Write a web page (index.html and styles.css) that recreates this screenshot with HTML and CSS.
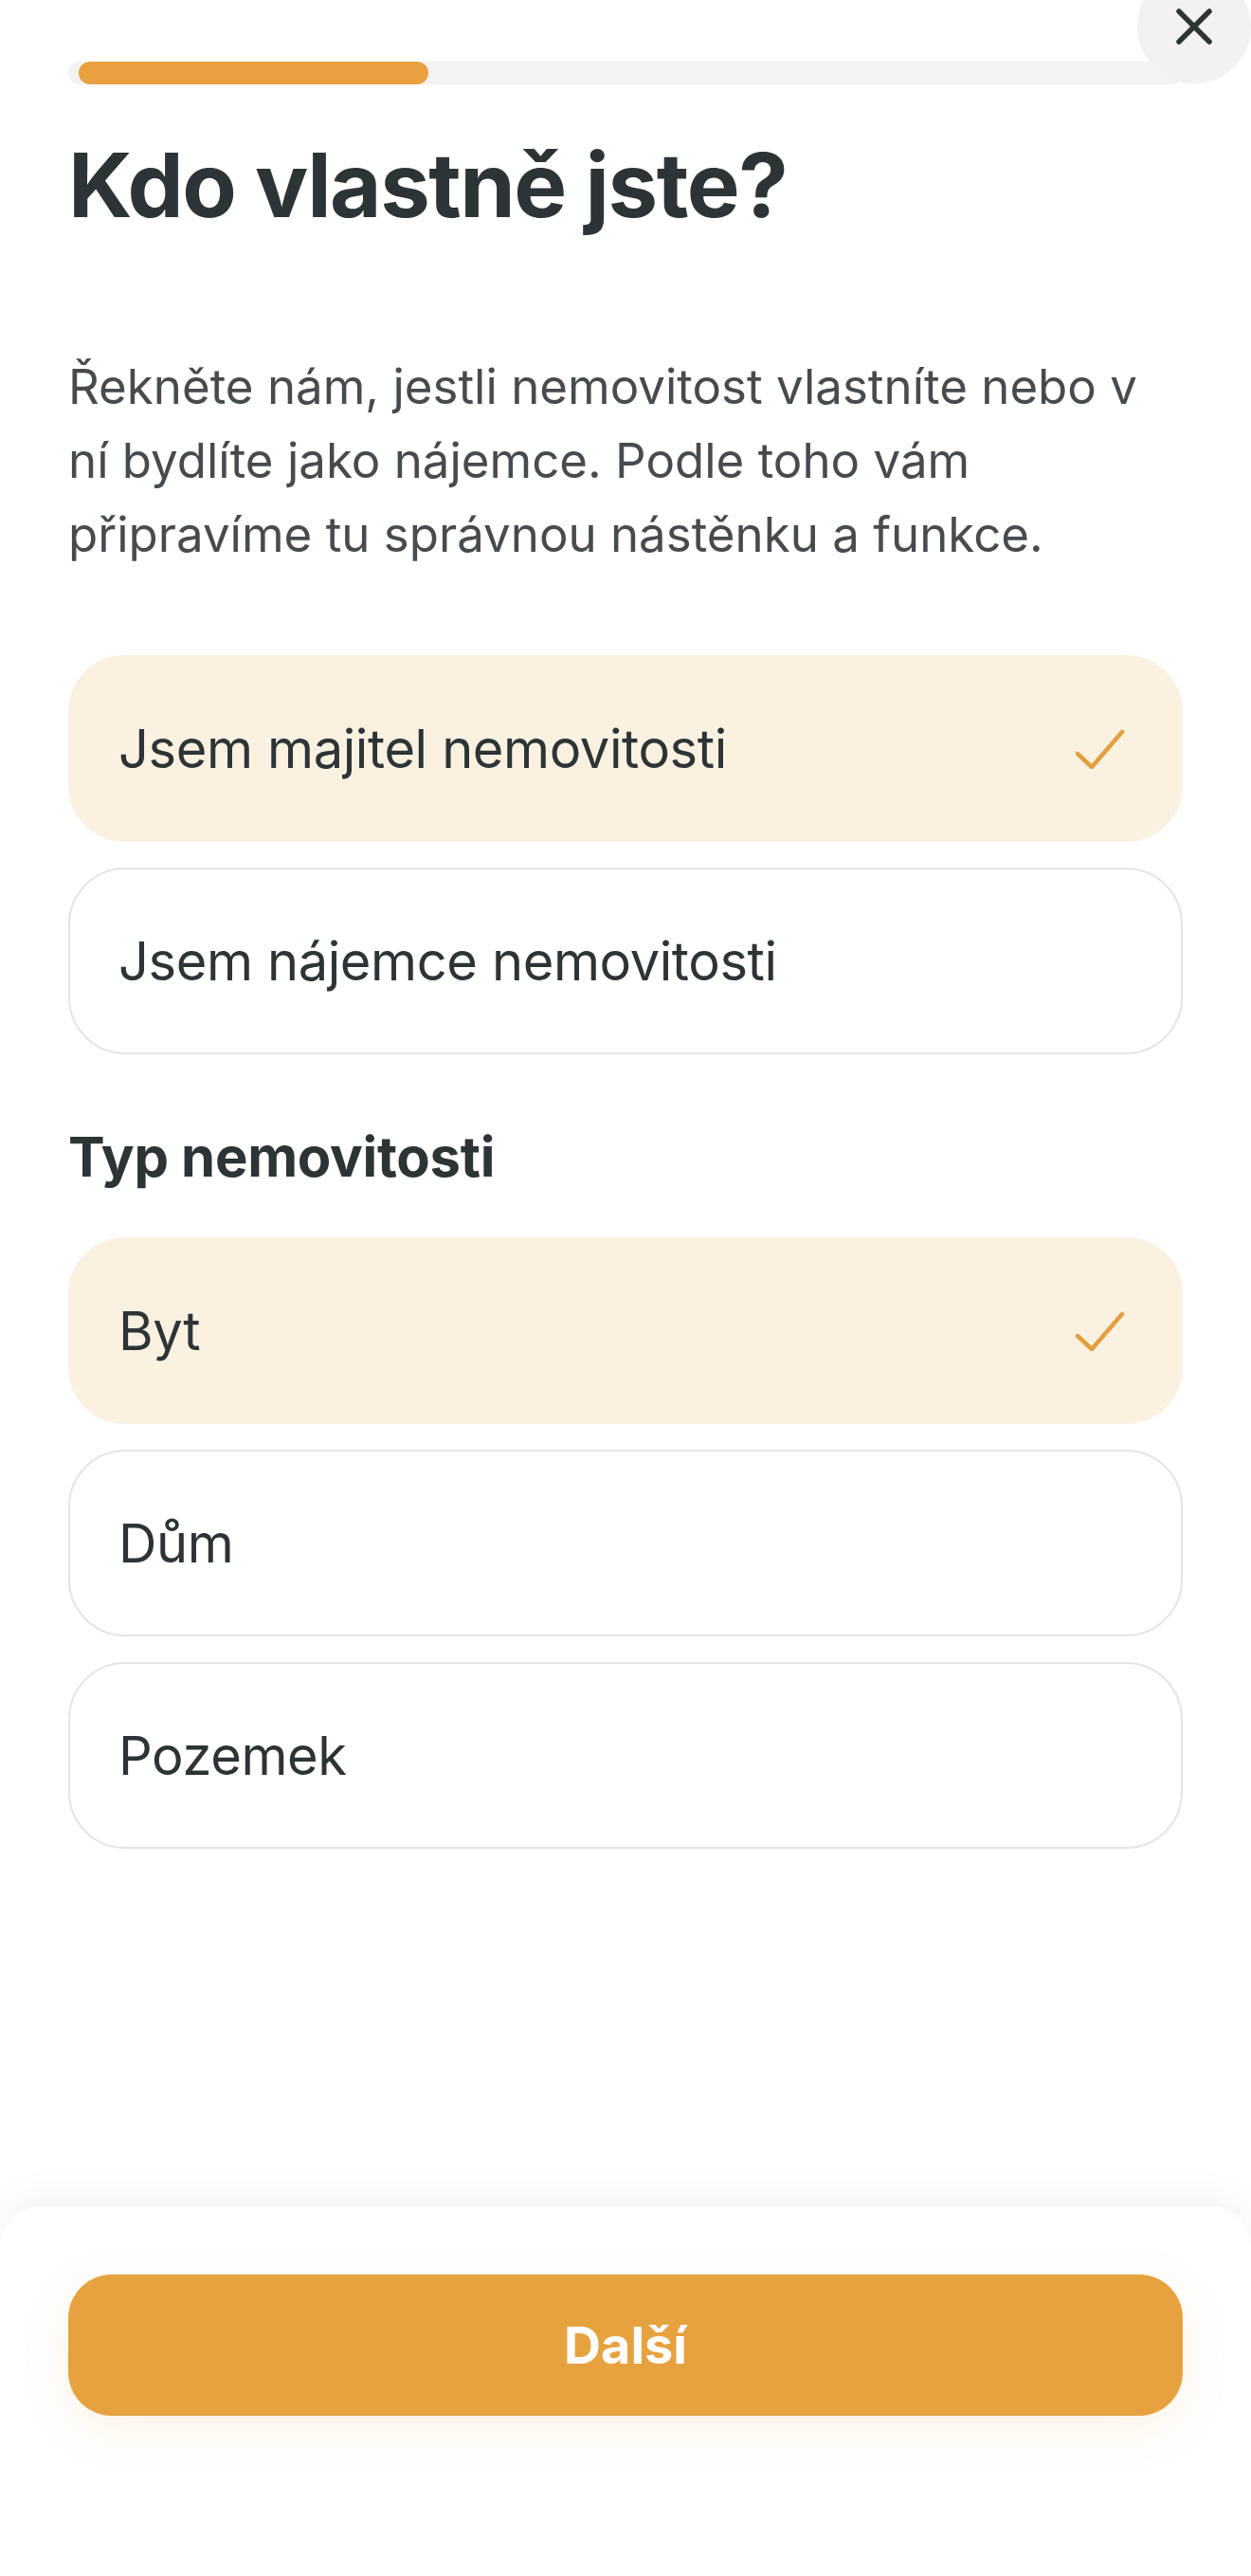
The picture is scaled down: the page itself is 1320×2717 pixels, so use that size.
FILE: index.html
```html
<!DOCTYPE html>
<html lang="cs">

<head>
  <title>Kdo vlastně jste?</title>
  <meta name="viewport" content="width=device-width,initial-scale=1">
  <link rel="stylesheet" href="styles.css">
</head>

<body>
  <div class="screen">
    <button class="close" aria-label="Zavřít">
      <svg width="38" height="38" viewBox="0 0 38 38">
        <path d="M3 3 L35 35 M35 3 L3 35" />
      </svg>
    </button>

    <main class="content">
      <div class="progress">
        <div class="progress__fill" style="width: 31.7%"></div>
      </div>

      <h1 class="title">Kdo vlastně jste?</h1>

      <p class="intro">Řekněte nám, jestli nemovitost vlastníte nebo v ní bydlíte jako nájemce. Podle toho vám připravíme tu správnou nástěnku a funkce.</p>

      <div class="options">
        <div class="option option--active">
          <span>Jsem majitel nemovitosti</span>
          <svg class="option__check" width="52" height="42" viewBox="0 0 52 42">
            <path d="M2 26 L17 40 L49 3" />
          </svg>
        </div>
        <div class="option">
          <span>Jsem nájemce nemovitosti</span>
        </div>
      </div>

      <h2 class="section-title">Typ nemovitosti</h2>

      <div class="options">
        <div class="option option--active">
          <span>Byt</span>
          <svg class="option__check" width="52" height="42" viewBox="0 0 52 42">
            <path d="M2 26 L17 40 L49 3" />
          </svg>
        </div>
        <div class="option">
          <span>Dům</span>
        </div>
        <div class="option">
          <span>Pozemek</span>
        </div>
      </div>
    </main>

    <footer class="footer">
      <button class="next">Další</button>
    </footer>
  </div>
</body>

</html>
```

FILE: styles.css
```css
* {
  box-sizing: border-box;
}

body {
  margin: 0;
  background: #fff;
  color: #2d3436;
  font-family: Inter, 'Noto Sans', sans-serif;
}

.screen {
  position: relative;
  min-height: 100vh;
  display: flex;
  flex-direction: column;
  overflow: hidden;
}

.content {
  flex: 1;
  padding: 65px 72px 0;
}

/* progress */

.progress {
  height: 24px;
  border-radius: 12px;
  background: #f3f3f3;
  padding-left: 11px;
}

.progress__fill {
  height: 24px;
  border-radius: 12px;
  background: #e8a040;
}

/* close button sits over the top right corner */

.close {
  position: absolute;
  top: -32px;
  right: 0;
  width: 120px;
  height: 120px;
  padding: 0;
  border: none;
  border-radius: 50%;
  background: #f2f2f2;
  display: flex;
  align-items: center;
  justify-content: center;
  z-index: 2;
}

.close path {
  stroke: #2d3436;
  stroke-width: 5.5;
  stroke-linecap: round;
  fill: none;
}

/* text */

.title {
  margin: 52px 0 0;
  font-size: 94px;
  line-height: 108px;
  font-weight: 700;
  letter-spacing: -1.5px;
}

.intro {
  margin: 120px 0 0;
  font-size: 51px;
  line-height: 78px;
  color: #474b4e;
}

.section-title {
  margin: 73px 0 50px;
  font-size: 58px;
  line-height: 70px;
  font-weight: 700;
  letter-spacing: -0.3px;
}

/* options */

.options {
  display: flex;
  flex-direction: column;
  gap: 27px;
}

.intro + .options {
  margin-top: 88px;
}

.option {
  height: 197px;
  display: flex;
  align-items: center;
  justify-content: space-between;
  padding: 0 59px 0 51px;
  border: 2px solid #e4e4e4;
  border-radius: 60px;
  font-size: 56px;
  letter-spacing: -0.4px;
  color: #2d3436;
}

.option--active {
  background: #faf1e1;
  border-color: #faf1e1;
}

.option__check path {
  stroke: #e3a03e;
  stroke-width: 4.5;
  stroke-linecap: round;
  stroke-linejoin: round;
  fill: none;
}

/* footer */

.footer {
  background: #fff;
  border-radius: 42px 42px 0 0;
  box-shadow: 0 -10px 40px rgba(0, 0, 0, 0.05);
  padding: 72px 72px 169px;
}

.next {
  display: block;
  width: 100%;
  height: 149px;
  border: none;
  border-radius: 46px;
  background: #e6a23f;
  color: #fff;
  font-family: Inter, 'Noto Sans', sans-serif;
  font-size: 54px;
  font-weight: 700;
  box-shadow: 0 14px 50px rgba(230, 162, 63, 0.14);
}
```
